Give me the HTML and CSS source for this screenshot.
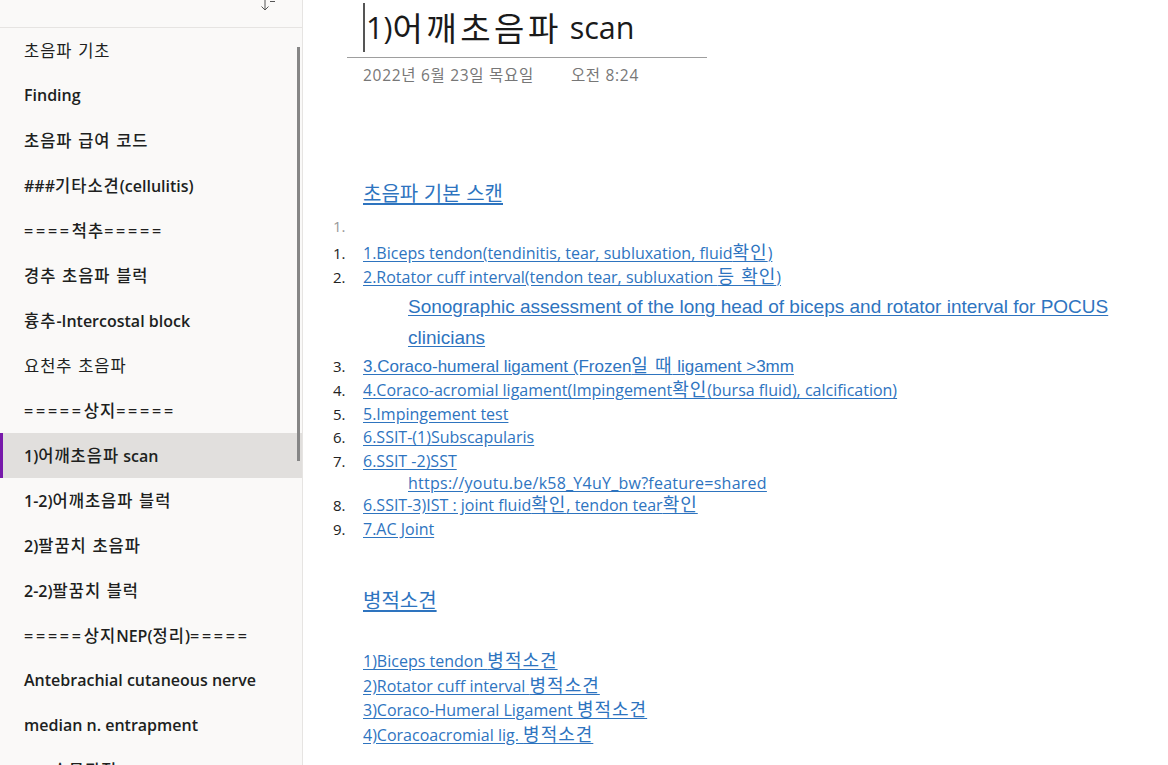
FILE: index.html
```html
<!DOCTYPE html>
<html lang="ko">
<head>
<meta charset="utf-8">
<title>1)어깨초음파 scan</title>
<link rel="stylesheet" href="styles.css">
</head>
<body>
<aside class="sidebar">
  <div class="topbar">
    <svg class="sort-icon" width="16" height="12" viewBox="0 0 16 12">
      <path d="M5 -2 V10 M1.5 6.5 L5 10 L8.5 6.5" fill="none" stroke="#555" stroke-width="1"/>
      <path d="M10 1.5 H15" fill="none" stroke="#555" stroke-width="1"/>
    </svg>
  </div>
  <ul class="nav">
    <li class="nav-item light"><span class="k">초음파 기초</span></li>
    <li class="nav-item">Finding</li>
    <li class="nav-item"><span class="k">초음파 급여 코드</span></li>
    <li class="nav-item">###<span class="k">기타소견</span>(cellulitis)</li>
    <li class="nav-item"><span class="eq">====</span><span class="k">척추</span><span class="eq">=====</span></li>
    <li class="nav-item"><span class="k">경추 초음파 블럭</span></li>
    <li class="nav-item"><span class="k">흉추</span>-Intercostal block</li>
    <li class="nav-item light"><span class="k">요천추 초음파</span></li>
    <li class="nav-item"><span class="eq">=====</span><span class="k">상지</span><span class="eq">=====</span></li>
    <li class="nav-item selected">1)<span class="k">어깨초음파</span> scan</li>
    <li class="nav-item">1-2)<span class="k">어깨초음파 블럭</span></li>
    <li class="nav-item">2)<span class="k">팔꿈치 초음파</span></li>
    <li class="nav-item">2-2)<span class="k">팔꿈치 블럭</span></li>
    <li class="nav-item"><span class="eq">=====</span><span class="k">상지</span>NEP(<span class="k">정리</span>)<span class="eq">=====</span></li>
    <li class="nav-item">Antebrachial cutaneous nerve</li>
    <li class="nav-item">median n. entrapment</li>
    <li class="nav-item">3-1)<span class="k">손목관절</span>(Radial)</li>
  </ul>
  <div class="scrollbar"></div>
</aside>
<main class="page">
  <div class="title-block">
    <h1 class="title"><span class="cursor"></span>1)<span class="tk">어깨초음파</span>&nbsp;scan</h1>
  </div>
  <div class="date"><span>2022년 6월 23일 목요일</span><span class="time">오전 8:24</span></div>

  <div class="content">
    <h2 class="heading h-first"><a>초음파 기본 스캔</a></h2>
    <ol class="list">
      <li class="row empty"><span class="num gray">1.</span><span></span></li>
      <li class="row"><span class="num">1.</span><a>1.Biceps tendon(tendinitis, tear, subluxation, fluid<span class="ko">확인</span>)</a></li>
      <li class="row"><span class="num">2.</span><a>2.Rotator cuff interval(tendon tear, subluxation <span class="ko">등 확인</span>)</a></li>
      <li class="sub sono"><a>Sonographic assessment of the long head of biceps and rotator interval for POCUS</a></li>
      <li class="sub sono sono2"><a>clinicians</a></li>
      <li class="row r3"><span class="num">3.</span><a class="narrow">3.Coraco-humeral ligament (Frozen<span class="ko">일 때</span> ligament &gt;3mm</a></li>
      <li class="row"><span class="num">4.</span><a>4.Coraco-acromial ligament(Impingement<span class="ko">확인</span>(bursa fluid), calcification)</a></li>
      <li class="row"><span class="num">5.</span><a>5.Impingement test</a></li>
      <li class="row"><span class="num">6.</span><a class="cal">6.SSIT-(1)Subscapularis</a></li>
      <li class="row"><span class="num">7.</span><a class="cal">6.SSIT -2)SST</a></li>
      <li class="sub url"><a>https://youtu.be/k58_Y4uY_bw?feature=shared</a></li>
      <li class="row"><span class="num">8.</span><a>6.SSIT-3)IST : joint fluid<span class="ko">확인</span>, tendon tear<span class="ko">확인</span></a></li>
      <li class="row"><span class="num">9.</span><a class="cal">7.AC Joint</a></li>
    </ol>

    <h2 class="heading h-second"><a>병적소견</a></h2>
    <div class="findings">
      <div class="finding"><a>1)Biceps tendon <span class="ko">병적소견</span></a></div>
      <div class="finding"><a>2)Rotator cuff interval <span class="ko">병적소견</span></a></div>
      <div class="finding"><a>3)Coraco-Humeral Ligament <span class="ko">병적소견</span></a></div>
      <div class="finding"><a>4)Coracoacromial lig. <span class="ko">병적소견</span></a></div>
    </div>
  </div>
</main>
</body>
</html>
```
FILE: styles.css
```css
html, body {
  margin: 0;
  padding: 0;
  height: 765px;
  overflow: hidden;
  background: #ffffff;
}
body {
  display: flex;
  font-family: "Open Sans", "Noto Sans CJK KR", sans-serif;
}
.sidebar {
  width: 302px;
  flex: 0 0 302px;
  background: #faf9f8;
  border-right: 1px solid #e6e4e2;
  position: relative;
  overflow: hidden;
  height: 765px;
}
.topbar {
  height: 27px;
  border-bottom: 1px solid #e6e4e2;
  display: flex;
  justify-content: flex-end;
  align-items: flex-start;
  padding-right: 26px;
}
.sort-icon {
  display: block;
}
.nav {
  list-style: none;
  margin: 0;
  padding: 0;
}
.nav-item {
  height: 45px;
  line-height: 45px;
  padding-left: 24px;
  font-size: 16px;
  font-weight: 600;
  color: #201f1e;
  white-space: nowrap;
  position: relative;
}
.nav-item .k {
  font-family: "Noto Sans CJK KR", sans-serif;
  font-size: 16.5px;
  letter-spacing: 1px;
  font-weight: 500;
}
.nav-item .eq {
  letter-spacing: 2.8px;
}
.nav-item.light,
.nav-item.light .k {
  font-weight: 400;
}
.nav-item.selected {
  background: #e1dfdd;
}
.nav-item.selected::before {
  content: "";
  position: absolute;
  left: 0;
  top: 0;
  bottom: 0;
  width: 3px;
  background: #7719aa;
}
.scrollbar {
  position: absolute;
  left: 297px;
  top: 47px;
  width: 3px;
  height: 414px;
  background: #868686;
}
.page {
  flex: 1;
  padding-left: 44px;
  color: #222;
}
.title-block {
  width: 360px;
  border-bottom: 1px solid #9e9e9e;
  padding-left: 16px;
  box-sizing: border-box;
  height: 58px;
  padding-top: 3px;
}
.title {
  margin: 0;
  font-size: 30.5px;
  font-weight: 400;
  line-height: 49px;
  color: #1a1a1a;
  font-family: "Open Sans", "Noto Sans CJK KR", sans-serif;
  display: flex;
  align-items: center;
  white-space: nowrap;
}
.title .tk {
  font-family: "Noto Sans CJK KR", sans-serif;
  font-size: 33px;
  letter-spacing: 3.5px;
  font-weight: 400;
}
.cursor {
  display: inline-block;
  width: 2px;
  height: 49px;
  background: #555;
  margin-right: 1px;
}
.date {
  padding-left: 16px;
  margin-top: 7px;
  font-size: 15.5px;
  letter-spacing: 0.7px;
  color: #777;
  line-height: 20px;
  font-family: "Open Sans", "Noto Sans CJK KR", sans-serif;
}
.date .time {
  margin-left: 37px;
}
.content {
  padding-left: 16px;
}
a {
  color: #2e74bf;
  text-decoration: underline;
  text-underline-offset: 2px;
}
.heading {
  margin: 0;
  font-size: 20px;
  font-weight: 400;
  line-height: 28px;
  font-family: "Noto Sans CJK KR", sans-serif;
}
.h-first {
  margin-top: 94px;
}
.h-second {
  margin-top: 45px;
}
.list {
  list-style: none;
  margin: 5px 0 0 -30px;
  padding: 0;
}
.row {
  display: grid;
  grid-template-columns: 30px 1fr;
  height: 23.7px;
  line-height: 23.7px;
  font-size: 16px;
  font-family: "Open Sans", "Noto Sans CJK KR", sans-serif;
  white-space: nowrap;
}
.row.empty {
  height: 30px;
  line-height: 28px;
}
.row.r3 {
  margin-top: 2px;
}
.num {
  color: #222;
  font-size: 15px;
}
.num.gray {
  color: #999;
}
.ko {
  font-family: "Noto Sans CJK KR", sans-serif;
  font-size: 18px;
  letter-spacing: 1px;
  line-height: 1;
}
.sub {
  padding-left: 75px;
  white-space: nowrap;
}
.sono {
  font-family: "Liberation Sans", sans-serif;
  font-size: 19px;
  line-height: 31px;
  height: 31px;
  margin-top: 2px;
}
.sono2 {
  margin-top: 0;
}
.narrow {
  font-family: "Liberation Sans", sans-serif;
  font-size: 17px;
}
.cal {
  font-size: 16px;
}
.url {
  font-family: "Open Sans", sans-serif;
  font-size: 16px;
  letter-spacing: 0.25px;
  height: 20px;
  line-height: 19px;
}
.findings {
  margin-top: 35px;
  font-family: "Open Sans", "Noto Sans CJK KR", sans-serif;
  font-size: 16px;
}
.finding {
  height: 24.5px;
  line-height: 24.5px;
  white-space: nowrap;
}
```
